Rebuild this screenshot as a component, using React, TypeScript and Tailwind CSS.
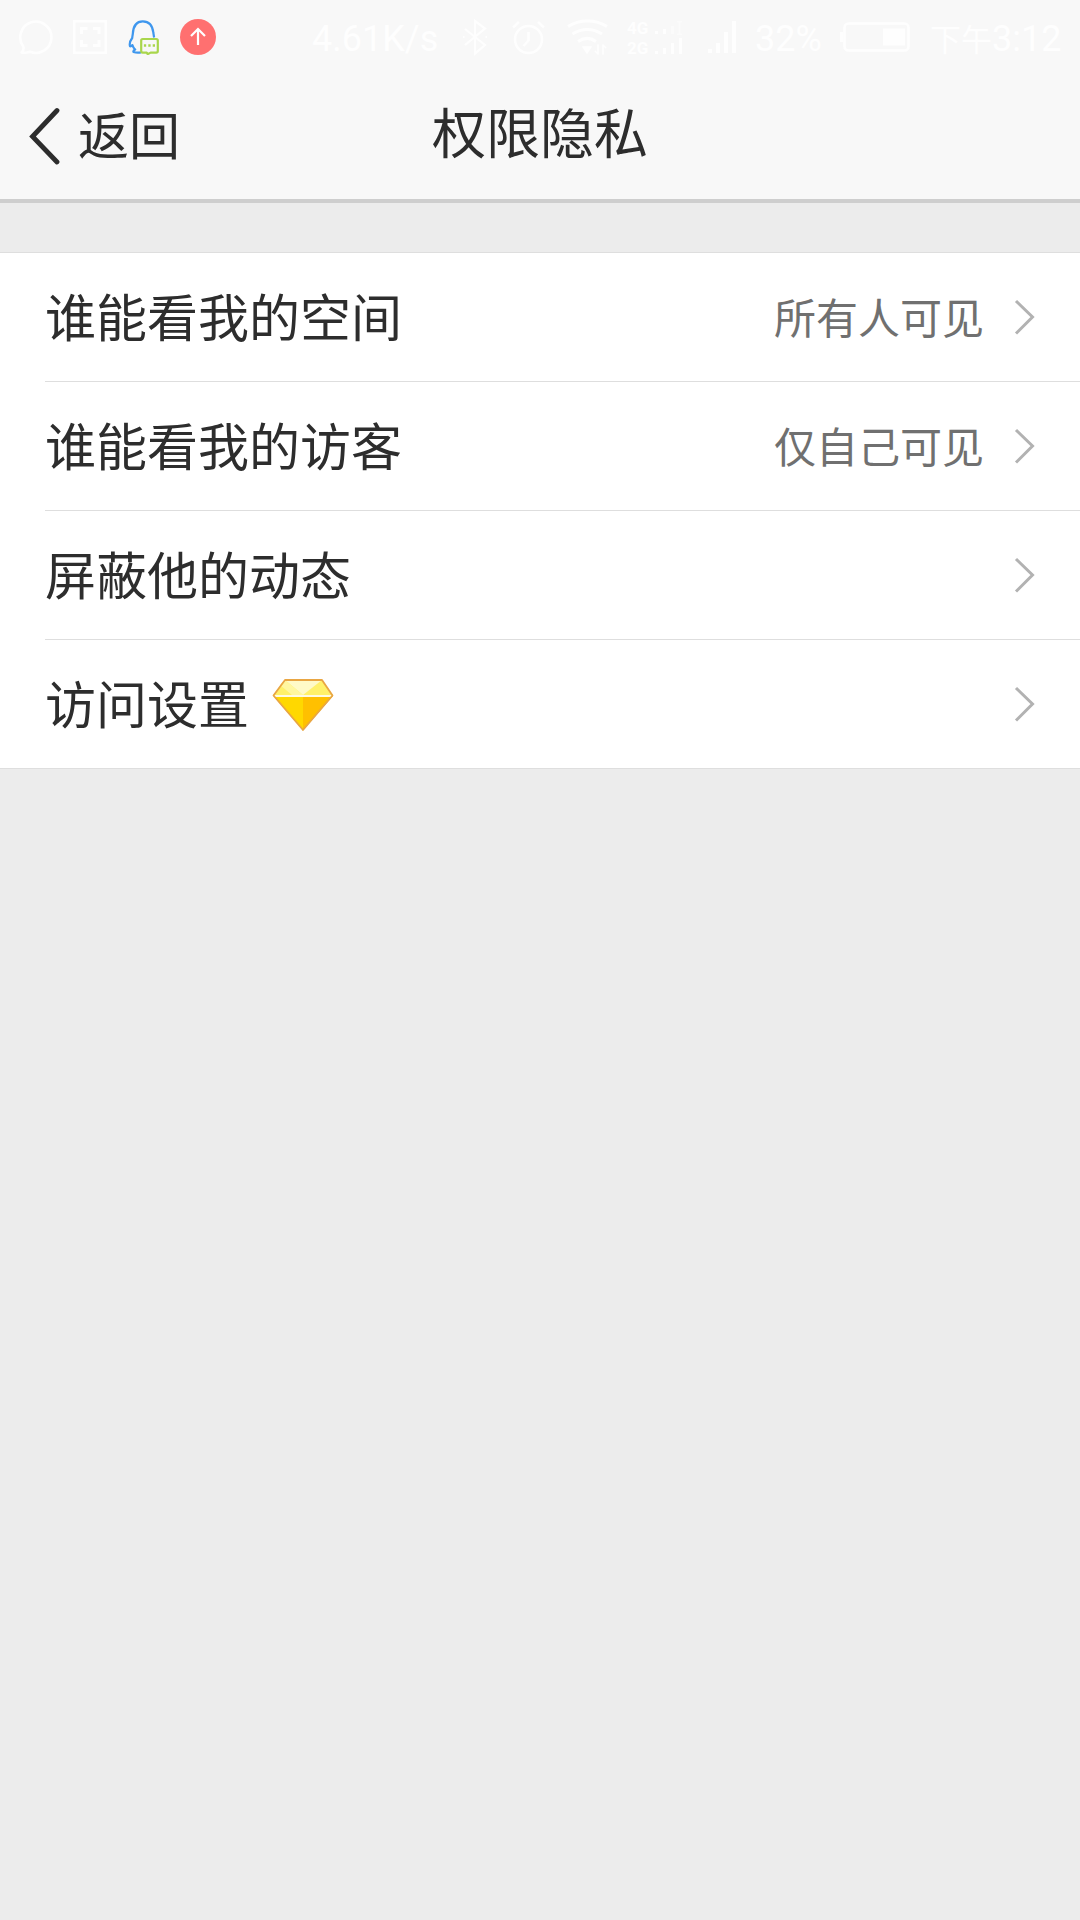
import React from 'react';

const rows = [
  { label: '谁能看我的空间', value: '所有人可见' },
  { label: '谁能看我的访客', value: '仅自己可见' },
  { label: '屏蔽他的动态' },
  { label: '访问设置', vip: true },
];

function NotificationIcons() {
  return (
    <div className="flex items-center gap-[19px]">
      <svg width="36" height="36" viewBox="0 0 36 36" fill="none" stroke="currentColor" strokeWidth="2.6">
        <path d="M3.5 33.5c2-1.5 2.4-3.5 1.8-6A15.6 15.6 0 1 1 12 32.7c-2.8 1-5.5 1.2-8.5.8Z" strokeLinejoin="round" />
      </svg>
      <svg width="34" height="36" viewBox="0 0 34 36" fill="none" stroke="currentColor" strokeWidth="2.6">
        <rect x="1.3" y="2.3" width="31.4" height="31.4" />
        <path d="M8.5 15V9.5h6M20 9.5h6V15M26 21v5.5h-6M14.5 26.5h-6V21" strokeWidth="3" />
      </svg>
      <svg className="ml-[2px] mr-[1px]" width="31" height="36" viewBox="0 0 31 36" fill="none" strokeLinejoin="round">
        <path
          d="M13 33.3c-2.5.5-5.5.3-7.500-.3-.5-1 .2-1.700 1.700-2.500-1.500-1.200-2.300-2.700-2.800-4.500-.8 1-1.500 1.500-2.400 1.200-.8-2.800.1-5.400 2.200-8.200.2-1.700.4-2.800.6-4C5.2 6.5 8.6 2.3 14.8 2.3c6 0 9.700 4.200 10.500 11.200l.8 5"
          stroke="#3f97ee"
          strokeWidth="2.2"
        />
        <path d="M14.7 20h13.6c.8 0 1.500.7 1.500 1.500v10.600c0 .8-.7 1.500-1.500 1.500h-5.700l-2.900 1.600-1-1.600h-4c-.8 0-1.500-.7-1.500-1.500V21.500c0-.8.7-1.500 1.500-1.500Z" fill="#f8f8f8" stroke="#a9d64c" strokeWidth="2.2" />
        <path d="M15.9 26.5h2.3M20.3 26.5h2.3M24.7 26.5H27" stroke="#a9d64c" strokeWidth="2.3" />
      </svg>
      <svg width="38" height="38" viewBox="0 0 38 38" fill="none">
        <circle cx="19" cy="19" r="18" fill="#ff7070" />
        <path d="M19 27V11.5M12 18l7-7 7 7" stroke="#fff" strokeWidth="2.2" />
      </svg>
    </div>
  );
}

function StatusBar() {
  return (
    <div className="flex h-[74px] items-center pl-[18px] pr-[18px] font-[Roboto,'Noto_Sans_CJK_SC',sans-serif] text-[36px] leading-none text-[#fefefe]">
      <NotificationIcons />
      <div className="ml-auto flex items-center whitespace-nowrap">
        <span className="mr-[24px] w-[126px] pt-[3px]">4.61K/s</span>
        <svg className="mr-[23px]" width="26" height="38" viewBox="0 0 26 38" fill="none" stroke="currentColor" strokeWidth="2.2">
          <path d="M3 11l20 16-10 8.500V3l10 7.500L3 27M1 19h1.500M23.500 19H25" />
        </svg>
        <svg className="mr-[20px]" width="35" height="36" viewBox="0 0 35 36" fill="none" stroke="currentColor" strokeWidth="2.5">
          <circle cx="17.5" cy="20.5" r="13.5" />
          <path d="M17.5 13v8.500l-5 5.500M2 8.500 8 3M33 8.500 27 3" />
        </svg>
        <svg className="mr-[18px]" width="43" height="38" viewBox="0 0 43 38" fill="none" stroke="currentColor" strokeWidth="3">
          <path d="M2 8.500c11.500-7.300 27.500-7.300 39 0M6.500 16c9-6 20.500-6 29.500 0M12 23.500c6-4 12.500-4 18 0" />
          <path d="M17 29h8l-4 6ZM32 26.500v10M37 26.500v10M29 33l3 3M40 30l-3-3" fill="currentColor" strokeWidth="1.5" />
        </svg>
        <div className="mr-[24px] flex items-center gap-[5px]">
          <div className="flex w-[22px] flex-col pt-[1px] text-[17px] font-bold leading-[20px]">
            <span>4G</span>
            <span>2G</span>
          </div>
          <svg width="29" height="38" viewBox="0 0 29 38" fill="currentColor">
            <path d="M1 13h3v3H1zM9 11h3v5H9z" />
            <path d="M17 8h3v8h-3zM23 3h5v1.500h-1.500v11H28V17h-5v-1.500h1.500v-11H23z" fillOpacity="0.5" />
            <path d="M1 33h3v3H1zM9 30h3v6H9zM17 25h3v11h-3zM25 20h3v16h-3z" />
          </svg>
        </div>
        <svg className="mr-[18px]" width="30" height="38" viewBox="0 0 30 38" fill="currentColor">
          <path d="M1 31h4v4H1zM9 25h4v10H9zM17 14h4v21h-4zM25 3h4v32h-4z" />
        </svg>
        <span className="mr-[19px] w-[66px] pt-[3px]">32%</span>
        <svg className="mr-[20px]" width="70" height="34" viewBox="0 0 70 34" fill="none">
          <rect x="4.5" y="3.5" width="64" height="27" rx="4" stroke="currentColor" strokeWidth="2.6" />
          <path d="M0 12h3v10H0zM43 8.500h22v17H43z" fill="currentColor" />
        </svg>
        <span className="w-[132px] pt-[3px]">
          <span className="text-[31px]">下午</span>3:12
        </span>
      </div>
    </div>
  );
}

function Header() {
  return (
    <header className="h-[203px] border-b-4 border-[#cecece] bg-[#f8f8f8]">
      <StatusBar />
      <div className="grid h-[125px] grid-cols-3">
        <button className="flex items-start pl-[28px] pt-[29px]">
          <svg className="mt-[4px]" width="32" height="60" viewBox="0 0 32 60" fill="none" stroke="#2d2d2d" strokeWidth="4.8" strokeLinecap="round">
            <path d="M29 3.500 4.500 29.500 29 55" />
          </svg>
          <span className="ml-[18px] text-[51px] leading-[60px]">返回</span>
        </button>
        <h1 className="pt-[26px] text-center text-[54px] leading-[62px]">权限隐私</h1>
      </div>
    </header>
  );
}

function Diamond() {
  return (
    <svg className="ml-[23px] mt-[1px]" width="62" height="54" viewBox="0 0 62 54">
      <path d="M13 2h37l11 15.500L31 52 1 17.500Z" fill="#ffd800" />
      <path d="M31 18h30L31 52Z" fill="#ffc000" />
      <path d="M13 2h37l11 16H1Z" fill="#fff16a" />
      <path d="M13 2h37L31 17Z" fill="#fffac8" />
      <path d="M13 2 31 17H20L8 7Z" fill="#fff7a0" />
      <path d="M2 18h58" stroke="#fffbe2" strokeWidth="2" />
      <path d="M13 2h37l10.500 15.500L31 52 1.500 17.500Z" fill="none" stroke="#e9a643" strokeWidth="1.8" strokeLinejoin="round" />
    </svg>
  );
}

function Chevron() {
  return (
    <svg className="ml-[30px]" width="22" height="38" viewBox="0 0 22 38" fill="none" stroke="#b2b2b2" strokeWidth="3">
      <path d="M2 3l16.500 16L2 35.500" />
    </svg>
  );
}

export default function App() {
  return (
    <div className="min-h-[1920px] w-[1080px] bg-[#ececec] font-['Noto_Sans_CJK_SC',sans-serif] text-[#2d2d2d]">
      <Header />
      <ul className="mt-[49px] border-y border-[#dedede] bg-white">
        {rows.map((row, i) => (
          <li key={row.label} className="pl-[45px]">
            <div className={`flex items-center pr-[44px] ${i < rows.length - 1 ? 'h-[129px] border-b border-[#dedede]' : 'h-[128px]'}`}>
              <span className="-mt-[4px] text-[51px] leading-[60px]">{row.label}</span>
              {row.vip && <Diamond />}
              <div className="ml-auto flex items-center">
                {row.value && <span className="-mt-[2px] text-[42px] leading-[50px] text-[#707070]">{row.value}</span>}
                <Chevron />
              </div>
            </div>
          </li>
        ))}
      </ul>
    </div>
  );
}
